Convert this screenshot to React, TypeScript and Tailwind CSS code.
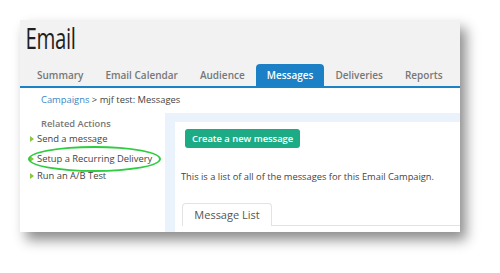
import React from 'react';

const tabs = ['Summary', 'Email Calendar', 'Audience', 'Messages', 'Deliveries', 'Reports'];
const actions = ['Send a message', 'Setup a Recurring Delivery', 'Run an A/B Test'];

const App: React.FC = () => {
  return (
    <div className="w-[500px] h-[273px] bg-white overflow-hidden font-['Open_Sans',sans-serif] whitespace-nowrap">
      <div className="ml-[20px] mt-[20px] w-[440px] h-[212px] bg-white overflow-hidden shadow-[6px_8px_12px_rgba(0,0,0,0.45)] flex flex-col">
        {/* Header */}
        <div className="h-[68px] bg-[#f2f2f2] flex flex-col justify-between border-b-2 border-[#1b82c6]">
          <h1 className="pl-[8px] text-[30px] leading-[36px] text-[#1f1f1f] origin-left scale-x-[0.68] tracking-[-0.5px]">Email</h1>
          <div className="flex items-end pl-[6px]">
            {tabs.map(t => (
              <div
                key={t}
                className={`px-[11px] h-[22px] flex items-center text-[10px] font-semibold rounded-t-[4px] ${t === 'Messages' ? 'bg-[#1b80c5] text-white' : 'text-[#777]'}`}
              >
                {t}
              </div>
            ))}
          </div>
        </div>

        {/* Breadcrumb */}
        <div className="h-[25px] flex items-center pl-[21px] text-[9.4px] text-[#444]">
          <span className="text-[#3b86c6]">Campaigns</span>
          <span>&nbsp;&gt; mjf test: Messages</span>
        </div>

        <div className="flex flex-1">
          {/* Sidebar */}
          <div className="w-[145px] pt-[4px]">
            <div className="pl-[21px] text-[9.3px] font-semibold text-[#777] leading-[14px]">Related Actions</div>
            <div className="flex flex-col mt-[1px]">
              {actions.map((a, i) => (
                <div key={a} className={`relative flex items-center pl-[10px] leading-[14px] ${i === 1 ? 'mt-[6px] mb-[3px]' : ''}`}>
                  <span className="w-0 h-0 border-y-[3px] border-y-transparent border-l-[4px] border-l-[#8cc63f] mr-[3px]"></span>
                  <span className="text-[9.4px] text-[#444]">{a}</span>
                  {i === 1 && (
                    <span className="absolute left-[8px] top-[-6px] w-[133px] h-[26px] rounded-[50%] border-2 border-[#2ecc40]"></span>
                  )}
                </div>
              ))}
            </div>
          </div>

          {/* Main */}
          <div className="flex-1 bg-[#eaf3fb] pl-[10px] pt-[9px]">
            <div className="h-full bg-white pl-[10px] pt-[2px] flex flex-col">
              <div>
                <button className="h-[19px] px-[7px] rounded-[3px] bg-[#1dab85] text-white text-[9.4px] font-semibold leading-[19px]">
                  Create a new message
                </button>
              </div>
              <p className="mt-[23px] -ml-[4px] text-[9.3px] leading-[12px] text-[#444]">This is a list of all of the messages for this Email Campaign.</p>
              <div className="mt-[20px] -ml-[3px] flex border-b border-[#e3e3e3]">
                <div className="w-[90px] h-[23px] border border-b-0 border-[#e3e3e3] rounded-t-[4px] flex items-center justify-center text-[11px] text-[#555] bg-white -mb-px">
                  Message List
                </div>
              </div>
            </div>
          </div>
        </div>
      </div>
    </div>
  );
};

export default App;
